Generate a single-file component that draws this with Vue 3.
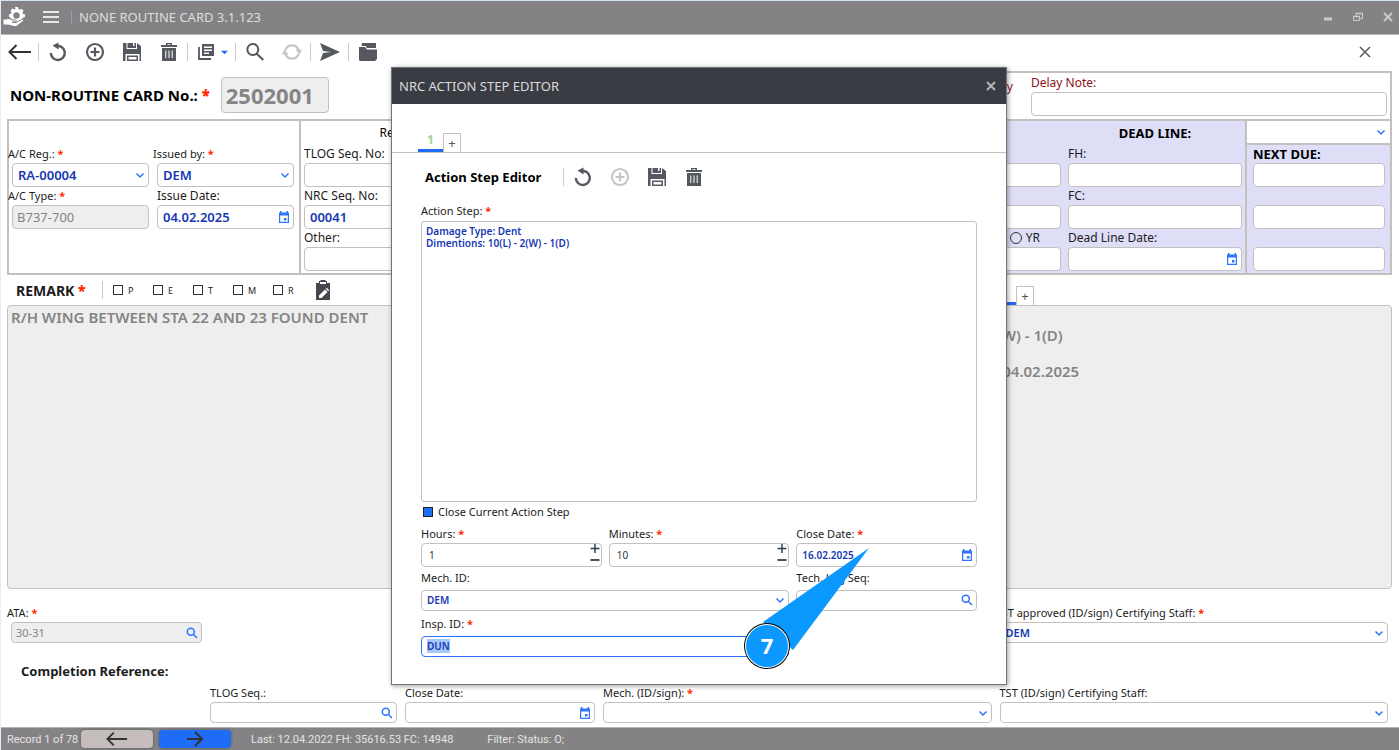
<template>
  <div class="page">
    <header class="titlebar">
      <svg class="logo" viewBox="0 0 22 22" aria-hidden="true">
        <path
          fill-rule="evenodd"
          d="M12 1h3l.5 2 1.500.7 1.800-1 1.700 2-1 1.600.6 1.600 1.900.6v2.400l-2 .6-.6 1.500 1 1.800-1.900 1.800-1.700-1-1.300.6-.5 1h-3l-.6-1.400-1.400-.6-1.700.9-1-1.300 1-2-.6-1.300-1.700-.6V8.300l1.900-.5.6-1.600-1-1.700 1.900-1.900 1.700 1 1.400-.6zM13.500 6.300a3.200 3.200 0 1 0 0 6.400 3.200 3.200 0 0 0 0-6.400z"
        />
        <path d="M0 13h3.500c2-.8 4-.4 5.500.9h3.300c1.500 0 1.500 2 0 2H9.500v.6H13l5.500-3c1.600-.6 2.500.8 1.400 1.900L14 20c-1 .6-2 .7-3 .5L5 19H0z" stroke="#848284" />
      </svg>
      <button class="bare menu" aria-label="Menu"><span></span><span></span><span></span></button>
      <h1>NONE ROUTINE CARD 3.1.123</h1>
      <div class="window-buttons">
        <button class="bare" aria-label="Minimize"><Icon name="minimize" :size="12" /></button>
        <button class="bare" aria-label="Restore"><Icon name="restore" :size="12" /></button>
        <button class="bare" aria-label="Close window"><Icon name="closeBold" :size="12" /></button>
      </div>
    </header>

    <nav class="toolbar">
      <template v-for="(item, i) in tools" :key="i">
        <i v-if="item === '|'" class="sep"></i>
        <button v-else class="bare tool" :class="item" :aria-label="item">
          <Icon :name="item" :size="item === 'back' ? 24 : 20" />
          <Icon v-if="item === 'stack'" name="caret" :size="7" />
        </button>
      </template>
      <button class="bare close-card" aria-label="Close card"><Icon name="close" :size="12" /></button>
    </nav>

    <section class="card-row">
      <div class="card-no">
        <label for="cardNo">NON-ROUTINE CARD No.: <b class="req">*</b></label>
        <input id="cardNo" v-model="form.cardNo" readonly />
      </div>
      <div class="delay">
        <label for="isDelay" class="is-delay"><input id="isDelay" type="checkbox" /> Delay</label>
        <div class="field">
          <label for="delayNote">Delay Note:</label>
          <div class="box"><input id="delayNote" /></div>
        </div>
      </div>
    </section>

    <section class="info">
      <div class="cell aircraft">
        <div class="field required">
          <label for="acReg">A/C Reg.: <b class="req">*</b></label>
          <div class="box"><select id="acReg"><option>{{ form.acReg }}</option></select><Icon name="chevron" :size="10" /></div>
        </div>
        <div class="field required">
          <label for="issuedBy">Issued by: <b class="req">*</b></label>
          <div class="box"><select id="issuedBy"><option>{{ form.issuedBy }}</option></select><Icon name="chevron" :size="10" /></div>
        </div>
        <div class="field required">
          <label for="acType">A/C Type: <b class="req">*</b></label>
          <div class="box disabled"><input id="acType" v-model="form.acType" readonly /></div>
        </div>
        <div class="field">
          <label for="issueDate">Issue Date:</label>
          <div class="box"><input id="issueDate" v-model="form.issueDate" /><Icon name="calendar" :size="12" /></div>
        </div>
      </div>

      <div class="cell refs">
        <h2>Ref No:</h2>
        <div class="field"><label for="tlogNo">TLOG Seq. No:</label><div class="box"><input id="tlogNo" /></div></div>
        <div class="field"><label for="nrcNo">NRC Seq. No:</label><div class="box"><input id="nrcNo" v-model="form.nrcNo" /></div></div>
        <div class="field"><label for="other">Other:</label><div class="box"><input id="other" /></div></div>
      </div>

      <div class="cell limits">
        <div class="column">
          <h2>INTERVAL:</h2>
          <div class="field"><label for="intFh"></label><div class="box"><input id="intFh" aria-label="Interval FH" /></div></div>
          <div class="field"><label for="intFc"></label><div class="box"><input id="intFc" aria-label="Interval FC" /></div></div>
          <div class="field">
            <label for="yr" class="period"><input id="yr" type="radio" />YR</label>
            <div class="box"><input aria-label="Interval period" /></div>
          </div>
        </div>
        <div class="column">
          <h2>DEAD LINE:</h2>
          <div class="field"><label for="fh">FH:</label><div class="box"><input id="fh" /></div></div>
          <div class="field"><label for="fc">FC:</label><div class="box"><input id="fc" /></div></div>
          <div class="field">
            <label for="deadDate">Dead Line Date:</label>
            <div class="box"><input id="deadDate" /><Icon name="calendar" :size="12" /></div>
          </div>
        </div>
      </div>

      <div class="cell next-due">
        <div class="due-select"><select aria-label="Due type"><option></option></select><Icon name="chevron" :size="10" /></div>
        <div class="field"><label for="nextFh"><b>NEXT DUE:</b></label><div class="box"><input id="nextFh" /></div></div>
        <div class="field"><label for="nextFc"></label><div class="box"><input id="nextFc" aria-label="Next due FC" /></div></div>
        <div class="field"><label for="nextDate"></label><div class="box"><input id="nextDate" aria-label="Next due date" /></div></div>
      </div>
    </section>

    <section class="work">
      <div class="remark">
        <div class="work-head">
          <label for="remark" class="remark-title">REMARK <b class="req">*</b></label>
          <i class="sep"></i>
          <label v-for="mark in marks" :key="mark" class="mark"><input type="checkbox" />{{ mark }}</label>
          <button class="bare note" aria-label="Edit remark"><Icon name="note" :size="20" /></button>
        </div>
        <textarea id="remark" v-model="form.remark" readonly></textarea>
      </div>
      <div class="actions">
        <div class="work-head">
          <div class="tabs">
            <button class="tab active">1</button>
            <button class="tab add">+</button>
          </div>
        </div>
        <textarea v-model="form.action" aria-label="Action" readonly></textarea>
      </div>
    </section>

    <section class="completion">
      <div class="field required">
        <label for="ata">ATA: <b class="req">*</b></label>
        <div class="box disabled"><input id="ata" v-model="form.ata" readonly /><Icon name="find" :size="12" /></div>
      </div>
      <div class="field required approved">
        <label for="approved">TST approved (ID/sign) Certifying Staff: <b class="req">*</b></label>
        <div class="box"><select id="approved"><option>DEM</option></select><Icon name="chevron" :size="10" /></div>
      </div>
      <h2>Completion Reference:</h2>
      <div class="field tlog">
        <label for="tlog">TLOG Seq.:</label>
        <div class="box"><input id="tlog" /><Icon name="find" :size="12" /></div>
      </div>
      <div class="field">
        <label for="closed">Close Date:</label>
        <div class="box"><input id="closed" /><Icon name="calendar" :size="12" /></div>
      </div>
      <div class="field">
        <label for="mech">Mech. (ID/sign): <b class="req">*</b></label>
        <div class="box"><select id="mech"><option></option></select><Icon name="chevron" :size="10" /></div>
      </div>
      <div class="field">
        <label for="staff">TST (ID/sign) Certifying Staff:</label>
        <div class="box"><select id="staff"><option></option></select><Icon name="chevron" :size="10" /></div>
      </div>
    </section>

    <footer class="statusbar">
      <span class="record">Record 1 of 78</span>
      <button class="prev" aria-label="Previous record"><Icon name="back" :size="22" /></button>
      <button class="next" aria-label="Next record"><Icon name="forward" :size="16" /></button>
      <span class="last">Last: 12.04.2022 FH: 35616.53 FC: 14948</span>
      <span>Filter: Status: O;</span>
    </footer>

    <div class="overlay">
      <div class="dialog" role="dialog" aria-labelledby="dialogTitle">
        <div class="dialog-head">
          <span id="dialogTitle">NRC ACTION STEP EDITOR</span>
          <button class="bare" aria-label="Close dialog"><Icon name="closeBold" :size="12" /></button>
        </div>
        <div class="tabs">
          <button class="tab active">1</button>
          <button class="tab add">+</button>
        </div>
        <div class="step-tools">
          <h2>Action Step Editor</h2>
          <i class="sep"></i>
          <button v-for="tool in stepTools" :key="tool" class="bare tool" :class="{ faded: tool === 'add' }" :aria-label="tool">
            <Icon :name="tool" :size="20" />
          </button>
        </div>
        <div class="dialog-body">
          <label for="step" class="step-label">Action Step: <b class="req">*</b></label>
          <textarea id="step" v-model="step.text"></textarea>
          <label class="close-step"><input v-model="step.close" type="checkbox" />Close Current Action Step</label>
          <div class="step-grid">
            <div class="field">
              <label for="hours">Hours: <b class="req">*</b></label>
              <div class="box plain">
                <input id="hours" v-model="step.hours" />
                <div class="spin">
                  <button class="bare" aria-label="More hours" @click="step.hours++"><Icon name="plus" :size="12" /></button>
                  <button class="bare" aria-label="Fewer hours" @click="step.hours--"><Icon name="minus" :size="12" /></button>
                </div>
              </div>
            </div>
            <div class="field">
              <label for="minutes">Minutes: <b class="req">*</b></label>
              <div class="box plain">
                <input id="minutes" v-model="step.minutes" />
                <div class="spin">
                  <button class="bare" aria-label="More minutes" @click="step.minutes++"><Icon name="plus" :size="12" /></button>
                  <button class="bare" aria-label="Fewer minutes" @click="step.minutes--"><Icon name="minus" :size="12" /></button>
                </div>
              </div>
            </div>
            <div class="field">
              <label for="stepDate">Close Date: <b class="req">*</b></label>
              <div class="box"><input id="stepDate" v-model="step.date" /><Icon name="calendar" :size="12" /></div>
            </div>
            <div class="field wide low">
              <label for="stepMech">Mech. ID:</label>
              <div class="box"><select id="stepMech"><option>DEM</option></select><Icon name="chevron" :size="10" /></div>
            </div>
            <div class="field low">
              <label for="techLog">Tech. Log Seq:</label>
              <div class="box"><input id="techLog" /><Icon name="find" :size="12" /></div>
            </div>
            <div class="field wide low">
              <label for="insp">Insp. ID: <b class="req">*</b></label>
              <div class="box focused"><input id="insp" ref="inspInput" v-model="step.insp" /></div>
            </div>
          </div>
        </div>
        <svg class="callout" viewBox="0 0 128 124">
          <path d="M126 1 20 75l30 28z" fill="#0b98ff" />
          <circle cx="24" cy="99" r="23" fill="#000" />
          <circle cx="24" cy="99" r="22" fill="#fff" />
          <circle cx="24" cy="99" r="21" fill="#0b98ff" />
          <text x="24" y="107" text-anchor="middle">7</text>
        </svg>
      </div>
    </div>
  </div>
</template>

<script setup>
import { h, onMounted, reactive, ref } from 'vue';

const line = (d, width = 2) => ({ d, fill: 'none', stroke: 'currentColor', 'stroke-width': width });
const fill = (d) => ({ d, fill: 'currentColor', 'fill-rule': 'evenodd' });

const icons = {
  back: { box: 24, paths: [line('M1.500 12H23M8.500 5l-7 7 7 7')] },
  forward: { box: 16, paths: [line('M0 8h15M8 1l7 7-7 7')] },
  reload: { box: 20, paths: [line('M8 4.200a7 7 0 1 1-5.200 6.800', 2.400), fill('M10.500 0.500v7L4.500 3.500z')] },
  add: { box: 20, paths: [line('M10 2a8 8 0 1 1 0 16 8 8 0 0 1 0-16zM10 5.500v9M5.500 10h9', 2.200)] },
  save: { box: 20, paths: [fill('M1 1h3.500v6H15V1l4 3v15h-1.500v-7h-14v7H1zM5.500 1H11v3h1.500V1H14v5H5.500zM5 13.500h11V19H5zM6.500 15v2.500h8V15z')] },
  trash: { box: 20, paths: [fill('M7 1h6v2h5v2H2V3h5zM8.500 2.200v.8h3v-.8zM3 6h14v13H3zM6.300 8.500V16h1V8.500zM9.500 8.500V16h1V8.500zM12.700 8.500V16h1V8.500z')] },
  stack: { box: 20, paths: [fill('M6 2h12v12H6zM8 4.500V6h8V4.500zM8 7.500V9h8V7.500zM8 10.500V12h5v-1.500z'), line('M3 5v12h12', 1.800)] },
  caret: { box: 8, paths: [fill('M0 2h8L4 6z')] },
  search: { box: 20, paths: [line('M7.800 2a5.500 5.500 0 1 1 0 11 5.500 5.500 0 0 1 0-11zM11.700 11.700l6.600 6.300', 2)] },
  sync: { box: 20, paths: [line('M3.300 8a7.200 7.200 0 0 1 13.400 0M16.700 12a7.200 7.200 0 0 1-13.400 0', 2.200), fill('M13.500 7.500h6.500l-2.500 5zM0 12.500h6.500L2.500 7.500z')] },
  send: { box: 20, paths: [fill('M0 1l20 9-20 9 3-8 8-1-8-1z')] },
  folder: { box: 20, paths: [fill('M4 1h14v5H9L7.500 4H3.500zM1 5h6l2 2.500h10V17l-2 2H2l-1-1z')] },
  close: { box: 12, paths: [line('M1 1l10 10M11 1L1 11', 1.500)] },
  closeBold: { box: 12, paths: [line('M2 2l8 8M10 2l-8 8', 2)] },
  minimize: { box: 12, paths: [line('M2 8h8', 3)] },
  restore: { box: 12, paths: [line('M1.500 5.500h6v4h-6zM4 5V2.500h6.500v5H8', 1), line('M1 5.500h7M4 2.500h7', 1.500)] },
  chevron: { box: 10, paths: [line('M1.500 3.500L5 7l3.500-3.500', 1.500)] },
  calendar: { box: 12, paths: [fill('M2 0h1.500v1.500h5V0H10v1.500h1V12H1V1.500h1zM2.200 4.500v6.300h7.600V4.500zM6 7h2.500v2.500H6z')] },
  find: { box: 12, paths: [line('M4.800 1.300a3.500 3.500 0 1 1 0 7 3.500 3.500 0 0 1 0-7zM7.500 7.500l3.500 3.500', 1.500)] },
  plus: { box: 12, paths: [line('M6 1v9M1.500 5.500h9', 1.500)] },
  minus: { box: 12, paths: [line('M1.500 6h9', 1.800)] },
  note: { box: 20, paths: [fill('M3 3h3V1h1.500V0h5v1H14v2h3v17H3zM7 2v2h6V2zM6 15.500V18h2.500l6-6-2.500-2.500zM12.700 8.800l2.500 2.500 1-1-2.500-2.500z')] },
};

const Icon = ({ name, size }) =>
  h(
    'svg',
    { class: 'icon icon-' + name, width: size, height: size, viewBox: `0 0 ${icons[name].box} ${icons[name].box}`, 'aria-hidden': true },
    icons[name].paths.map((p) => h('path', p))
  );
Icon.props = ['name', 'size'];

const tools = ['back', '|', 'reload', 'add', 'save', 'trash', '|', 'stack', '|', 'search', 'sync', '|', 'send', '|', 'folder'];
const stepTools = ['reload', 'add', 'save', 'trash'];
const marks = ['P', 'E', 'T', 'M', 'R'];

const form = reactive({
  cardNo: '2502001',
  acReg: 'RA-00004',
  issuedBy: 'DEM',
  acType: 'B737-700',
  issueDate: '04.02.2025',
  nrcNo: '00041',
  remark: 'R/H WING BETWEEN STA 22 AND 23 FOUND DENT',
  action: 'Damage Type: Dent\nDimentions: 10(L) - 2(W) - 1(D)\n\nDEM DUN Step Date: 04.02.2025',
  ata: '30-31',
});

const step = reactive({
  text: 'Damage Type: Dent\nDimentions: 10(L) - 2(W) - 1(D)',
  close: true,
  hours: 1,
  minutes: 10,
  date: '16.02.2025',
  insp: 'DUN',
});

const inspInput = ref(null);

onMounted(() => {
  inspInput.value.focus();
  inspInput.value.select();
});
</script>

<style>
body {
  margin: 0;
}
</style>

<style scoped>
* {
  box-sizing: border-box;
}

.page {
  position: relative;
  display: flex;
  flex-direction: column;
  min-height: 100vh;
  border-left: 1px solid #e3ecf8;
  background: #fff;
  color: #1c1c1c;
  font-family: 'Noto Sans', 'Open Sans', sans-serif;
  font-size: 12px;
}

input,
select,
textarea,
button {
  font: inherit;
  margin: 0;
}

h1,
h2 {
  margin: 0;
}

.bare {
  display: flex;
  align-items: center;
  justify-content: center;
  padding: 0;
  border: none;
  background: none;
  color: inherit;
}

.icon {
  display: block;
  flex: none;
}

.req {
  color: #ff2a00;
}

.sep {
  width: 1px;
  height: 18px;
  background: #cfcaca;
}

/* Title bar */
.titlebar {
  display: flex;
  align-items: center;
  height: 35px;
  padding: 0 5px 2px 2px;
  border-top: 1px solid #d4e3f0;
  border-bottom: 1px solid #bdb6b4;
  background: #848284;
  color: #dedede;
}

.logo {
  width: 22px;
  height: 22px;
  fill: #fff;
}

.menu {
  flex-direction: column;
  gap: 3px;
  width: 16px;
  margin: 0 12px 0 18px;
}

.menu span {
  width: 16px;
  height: 2px;
  background: #e8e8e8;
}

.titlebar h1 {
  padding-left: 7px;
  border-left: 1px solid #a09e9e;
  font-size: 13px;
  font-weight: 400;
  line-height: 14px;
}

.window-buttons {
  display: flex;
  gap: 18px;
  margin-left: auto;
  color: #cdcaca;
}

/* Toolbar */
.toolbar {
  display: flex;
  align-items: center;
  height: 34px;
  color: #55585f;
}

.tool {
  width: 37px;
  height: 28px;
}

.tool.back {
  color: #333;
}

.tool.stack {
  gap: 5px;
  width: 47px;
}

.tool.stack .icon-caret {
  color: #1f6cf8;
}

.tool.sync,
.tool.faded {
  color: #c4c6ca;
}

.close-card {
  margin: 0 28px 0 auto;
}

/* Fields */
.field {
  min-width: 0;
}

.field > label {
  display: block;
  height: 18px;
  line-height: 18px;
  white-space: nowrap;
}

.box {
  display: flex;
  align-items: center;
  height: 24px;
  padding: 0 3px 0 5px;
  border: 1px solid #c5bfbe;
  border-radius: 4px;
  background: #fff;
  color: #2f74ff;
}

.box input,
.box select,
.due-select select {
  flex: 1;
  min-width: 0;
  width: 0;
  height: 100%;
  padding: 0;
  border: none;
  outline: none;
  appearance: none;
  background: none;
  color: #1738b4;
  font-weight: 600;
}

.box.disabled {
  padding-left: 4px;
  background: #eee;
}

.box.disabled input {
  color: #858585;
  font-weight: 400;
}

/* Card number and delay */
.card-row {
  display: flex;
  justify-content: space-between;
  height: 50px;
  padding: 2px 7px 0 9px;
}

.card-no {
  display: flex;
  align-items: center;
  gap: 11px;
  color: #000;
  font-size: 15px;
  font-weight: 700;
}

.card-no input {
  width: 108px;
  height: 36px;
  padding: 0 4px;
  border: 1px solid #c5bfbe;
  border-radius: 4px;
  background: #eee;
  color: #858585;
  font-size: 22px;
}

.delay {
  display: flex;
  width: 37%;
  padding: 1px 3px 0;
  border: 2px solid #c5bfbe;
  border-bottom: none;
  color: #8b1018;
}

.is-delay {
  flex: 1;
  padding-right: 18px;
  line-height: 26px;
  text-align: right;
}

.delay .field {
  width: 356px;
}

/* Info panel */
.info {
  display: grid;
  grid-template-columns: 290px 200px 1fr 145px;
  margin: 0 7px 0 6px;
  border: 2px solid #c5bfbe;
}

.cell {
  border-left: 2px solid #c5bfbe;
  padding-bottom: 2px;
}

.cell:first-child,
.cell.limits {
  border-left: none;
}

.cell h2 {
  height: 24px;
  color: #000;
  font-size: 13px;
  line-height: 24px;
  text-align: center;
}

.info .box input,
.info .box select {
  font-size: 13px;
}

.info .required > label,
.completion .required > label {
  margin-left: -4px;
  font-size: 11px;
}

.aircraft {
  display: grid;
  grid-template-columns: 1fr 1fr;
  column-gap: 8px;
  align-content: start;
  padding: 24px 5px 2px 3px;
}

.refs {
  padding: 0 3px 2px;
}

.refs h2 {
  font-size: 12px;
  font-weight: 400;
}

.limits {
  display: flex;
  justify-content: flex-end;
  gap: 7px;
  padding-right: 3px;
  background: #dedef7;
}

.limits .column {
  width: 174px;
}

.field > .period {
  display: flex;
  align-items: center;
  justify-content: flex-end;
  gap: 4px;
  padding-right: 21px;
}

.period input {
  width: 12px;
  height: 12px;
  border: 1px solid #333;
  border-radius: 50%;
  appearance: none;
}

.next-due {
  background: #dedef7;
}

.next-due .field {
  padding: 0 5px 0 6px;
}

.next-due b {
  color: #000;
  font-size: 13px;
}

.due-select {
  display: flex;
  align-items: center;
  height: 24px;
  padding: 0 4px;
  border-bottom: 2px solid #c5bfbe;
  background: #fff;
  color: #2f74ff;
}

/* Remark and actions */
.work {
  display: flex;
  flex: 1;
  margin: 0 7px 0 6px;
}

.work > div {
  display: flex;
  flex-direction: column;
}

.remark {
  flex: 1;
}

.actions {
  width: 548px;
}

.work-head {
  display: flex;
  align-items: center;
  height: 30px;
}

.remark-title {
  width: 95px;
  padding-left: 9px;
  font-size: 14px;
  font-weight: 700;
}

.work-head .sep {
  margin-right: 10px;
}

.mark {
  display: flex;
  align-items: center;
  gap: 5px;
  width: 40px;
  font-size: 9px;
}

.mark input {
  width: 10px;
  height: 10px;
  border: 1px solid #333;
  appearance: none;
}

.note {
  color: #44474d;
}

.work textarea {
  flex: 1;
  width: 100%;
  padding: 2px 3px;
  border: 1px solid #c5bfbe;
  border-radius: 4px;
  outline: none;
  resize: none;
  background: #eee;
  color: #858585;
  font-size: 15px;
  font-weight: 600;
  line-height: 18px;
}

.tabs {
  display: flex;
  align-items: flex-end;
}

.tab {
  width: 25px;
  height: 22px;
  padding: 0;
  border: none;
  background: none;
}

.tab.active {
  border-bottom: 3px solid #1f6cf8;
  color: #a9d39b;
  font-size: 13px;
  font-weight: 700;
  line-height: 19px;
}

.tab.add {
  width: 18px;
  height: 19px;
  border: 1px solid #c5bfbe;
  border-bottom: none;
  color: #555;
  font-size: 13px;
  line-height: 18px;
}

.actions .tabs {
  align-self: flex-end;
  margin-left: 147px;
}

/* Completion */
.completion {
  display: grid;
  grid-template-columns: 191px 187px 190px 1fr 1fr;
  column-gap: 8px;
  padding: 15px 11px 4px 10px;
  font-size: 11px;
}

.completion .box {
  height: 21px;
}

.completion .approved {
  grid-column: 5;
}

.completion h2 {
  grid-column: 1 / -1;
  height: 41px;
  padding: 8px 0 0 10px;
  font-size: 13px;
  line-height: 40px;
}

.completion .tlog {
  grid-column: 2;
}

/* Status bar */
.statusbar {
  display: flex;
  align-items: center;
  height: 23px;
  padding-left: 6px;
  border-top: 1px solid #b5b2b2;
  background: #848284;
  color: #e4e4e4;
  font-family: Roboto, sans-serif;
  font-size: 11px;
}

.record {
  width: 74px;
}

.statusbar button {
  display: flex;
  align-items: center;
  justify-content: center;
  width: 72px;
  height: 18px;
  margin-right: 6px;
  padding: 0;
  border: none;
  border-radius: 4px;
  box-shadow: 0 0 3px #555;
  color: #333;
}

.prev {
  background: #c5bcbc;
}

.next {
  background: #1f6cf8;
}

.last {
  margin: 0 34px 0 14px;
}

/* Dialog */
.overlay {
  position: absolute;
  inset: 0;
  display: flex;
  align-items: center;
  justify-content: center;
  padding: 1px 2px 0 0;
}

.dialog {
  position: relative;
  width: 616px;
  border: 1px solid #70747b;
  background: #fff;
  box-shadow: 1px 1px 5px rgba(0, 0, 0, 0.4);
  font-size: 11px;
}

.dialog-head {
  display: flex;
  align-items: center;
  justify-content: space-between;
  height: 36px;
  padding: 0 9px 0 7px;
  background: #3a3c44;
  color: #dadada;
  font-size: 13px;
}

.dialog-head button {
  color: #b5b5b5;
}

.dialog .tabs {
  height: 49px;
  padding-left: 26px;
  border-bottom: 1px solid #c5bfbe;
}

.step-tools {
  display: flex;
  align-items: center;
  height: 48px;
  padding-left: 33px;
  color: #55585f;
}

.step-tools h2 {
  width: 138px;
  color: #000;
  font-size: 13px;
}

.dialog-body {
  padding: 0 29px 25px;
}

.step-label {
  display: block;
  height: 20px;
  line-height: 20px;
}

.dialog textarea {
  display: block;
  width: 100%;
  height: 281px;
  padding: 3px 4px;
  border: 1px solid #c5bfbe;
  border-radius: 3px;
  outline: none;
  resize: none;
  color: #1738b4;
  font-size: 10px;
  font-weight: 600;
  line-height: 12px;
}

.close-step {
  display: flex;
  align-items: center;
  gap: 5px;
  height: 20px;
  padding-left: 2px;
}

.close-step input {
  width: 10px;
  height: 10px;
  border: 1px solid #222;
  appearance: none;
}

.close-step input:checked {
  background: #1f6cf8;
}

.step-grid {
  display: grid;
  grid-template-columns: repeat(3, 1fr);
  column-gap: 7px;
  padding-top: 3px;
}

.step-grid input,
.step-grid select {
  font-size: 10px;
}

.step-grid .wide {
  grid-column: span 2;
}

.step-grid .low .box {
  height: 21px;
  margin-bottom: 2px;
}

.step-grid .low > label {
  height: 23px;
  line-height: 22px;
}

.box.plain {
  padding: 0 0 0 7px;
}

.box.plain input {
  color: #333;
  font-weight: 400;
}

.spin {
  color: #2f3f50;
}

.spin button {
  height: 11px;
}

.box.focused {
  border-color: #2f74ff;
}

.focused input::selection {
  background: #a6c8fb;
  color: #1738b4;
}

.callout {
  position: absolute;
  left: 351px;
  top: 479px;
  width: 128px;
  height: 124px;
  pointer-events: none;
}

.callout text {
  fill: #fff;
  font-size: 22px;
  font-weight: 700;
}
</style>
